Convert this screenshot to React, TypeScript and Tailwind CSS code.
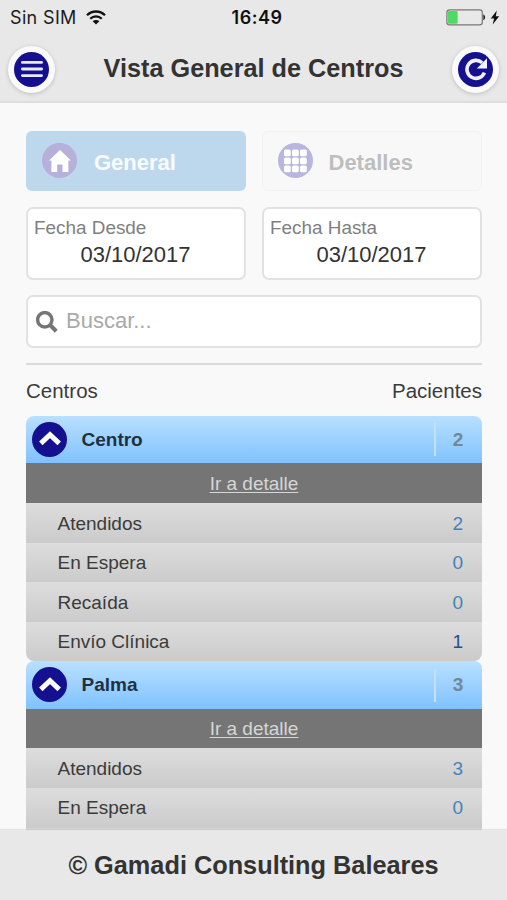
import type { ReactNode } from 'react';
import clsx from 'clsx';

interface CenterRow {
  label: string;
  value: number;
}

interface Center {
  name: string;
  total: number;
  rows: CenterRow[];
}

const CENTERS: Center[] = [
  {
    name: 'Centro',
    total: 2,
    rows: [
      { label: 'Atendidos', value: 2 },
      { label: 'En Espera', value: 0 },
      { label: 'Recaída', value: 0 },
      { label: 'Envío Clínica', value: 1 },
    ],
  },
  {
    name: 'Palma',
    total: 3,
    rows: [
      { label: 'Atendidos', value: 3 },
      { label: 'En Espera', value: 0 },
    ],
  },
];

function StatusBar() {
  return (
    <div className="grid h-[34px] grid-cols-3 items-center font-['Inter',sans-serif] text-[18px] text-[#1c1c1c]">
      <div className="flex items-center gap-[9px] pl-[10px]">
        <span className="tracking-[0.35px]">Sin SIM</span>
        <svg width="20" height="15" viewBox="0 0 20 15" fill="none" stroke="#111" strokeWidth="2.3">
          <path d="M1 5.2a12.8 12.8 0 0 1 18 0" />
          <path d="M4.3 8.7a8.1 8.1 0 0 1 11.4 0" />
          <path d="M10 14.6 6.7 11.3a4.7 4.7 0 0 1 6.6 0Z" fill="#111" stroke="none" />
        </svg>
      </div>
      <span className="pl-[7px] text-center font-semibold tracking-[0.5px] text-[#111]">16:49</span>
      <div className="flex items-center justify-end gap-[4px] pr-[7px]">
        <svg width="40" height="17" viewBox="0 0 40 17">
          <rect x="0.9" y="0.9" width="35.4" height="15" rx="2.6" fill="none" stroke="#777" strokeWidth="1.2" />
          <rect x="2" y="2" width="9.6" height="12.8" rx="1" fill="#4cd964" />
          <path d="M37.3 5.6c2.4.4 2.4 5.2 0 5.6Z" fill="#222" />
        </svg>
        <svg width="10" height="15" viewBox="0 0 10 15">
          <path d="M6.8.4.8 8.4h3.3L2.7 14.6 9.2 6.3H5.8Z" fill="#111" />
        </svg>
      </div>
    </div>
  );
}

function RoundButton({ label, children }: { label: string; children: ReactNode }) {
  return (
    <button
      type="button"
      aria-label={label}
      className="flex size-[47px] items-center justify-center rounded-full bg-[#fafafa] shadow-[0_1px_4px_rgba(0,0,0,0.18)]"
    >
      <span className="flex size-[35px] items-center justify-center rounded-full bg-[#14108f]">
        {children}
      </span>
    </button>
  );
}

function Tab({ label, active, icon }: { label: string; active?: boolean; icon: ReactNode }) {
  return (
    <button
      type="button"
      className={clsx(
        'flex h-[60px] items-center rounded-[6px] text-[22px] font-bold',
        active
          ? 'gap-[17px] bg-[#bdd8ec] pl-[16px] text-white/90'
          : 'gap-[16px] border border-[#f2f2f2] bg-[#f8f8f8] pl-[14.5px] text-[#bebebe]',
      )}
    >
      <span
        className={clsx(
          'mb-px flex size-[35px] items-center justify-center rounded-full',
          active ? 'bg-[#b5b1da]' : 'bg-[#b9b5df]',
        )}
      >
        {icon}
      </span>
      <span className="pt-[3px]">{label}</span>
    </button>
  );
}

function DateField({ label, value }: { label: string; value: string }) {
  return (
    <div className="h-[73px] rounded-[7px] border-2 border-[#e2e2e2] bg-white px-[6px] pt-[7px]">
      <p className="text-[18.9px] leading-[24px] text-[#7f7f7f]">{label}</p>
      <p className="pr-px text-center text-[22px] leading-[30px] text-[#333]">{value}</p>
    </div>
  );
}

function CenterGroup({ center, last }: { center: Center; last: boolean }) {
  return (
    <section
      className={clsx('shrink-0 overflow-hidden text-[19px]', last ? 'rounded-t-[8px]' : 'rounded-[8px]')}
    >
      <header className="flex h-[47.4px] items-center bg-linear-to-b from-[#b9e0ff] to-[#7fc2ff] pl-[6px]">
        <span className="mb-px flex size-[35px] items-center justify-center rounded-full bg-[#14108f]">
          <svg width="24" height="16" viewBox="0 0 24 16">
            <path d="m2.8 12.3 9.2-8.6 9.2 8.6" fill="none" stroke="#fff" strokeWidth="5" />
          </svg>
        </span>
        <span className="flex-1 pt-px pl-[14.5px] font-bold text-[#1f3140]">{center.name}</span>
        <span className="h-[33px] w-[2px] bg-linear-to-b from-[#bfe1fb] to-[#c9dded]" />
        <span className="w-[46px] pt-px pr-[2px] text-center font-bold text-[#71879a]">{center.total}</span>
      </header>
      <a className="flex h-[39.6px] items-center justify-center bg-[#757575] pt-[2px] text-[#d6d6d6] underline underline-offset-2">
        Ir a detalle
      </a>
      {center.rows.map((row) => (
        <div
          key={row.label}
          className="flex h-[39.6px] items-center justify-between bg-linear-to-b from-[#dddddd] to-[#cbcbcb] pt-[2px] pr-[19px] pl-[31.5px] text-[#3b3b3b]"
        >
          <span>{row.label}</span>
          <span className={row.label === 'Envío Clínica' ? 'text-[#24508c]' : 'text-[#4284ba]'}>
            {row.value}
          </span>
        </div>
      ))}
      {last ? <div className="h-[4px] bg-[#dadada]" /> : null}
    </section>
  );
}

export default function App() {
  return (
    <div className="flex h-[900px] w-[507px] flex-col overflow-hidden bg-[#f9f9f9] font-['Liberation_Sans',Arial,sans-serif] text-[#333]">
      <header className="h-[103px] shrink-0 border-b-2 border-[#dedede] bg-[#e8e8e8]">
        <StatusBar />
        <div className="flex h-[70px] items-center justify-between px-[8px]">
          <RoundButton label="Menú">
            <svg width="24" height="18" viewBox="0 0 24 18" stroke="#e9e9ff" strokeWidth="2.8" strokeLinecap="round">
              <path d="M2.4 2.4h19.2M2.4 9h19.2M2.4 15.6h19.2" />
            </svg>
          </RoundButton>
          <h1 className="text-[25.25px] font-bold">Vista General de Centros</h1>
          <RoundButton label="Actualizar">
            <svg width="24" height="24" viewBox="0 0 24 24">
              <path d="M18.2 5.8A9 9 0 1 0 20.4 15.6" fill="none" stroke="#f2f2ff" strokeWidth="3.6" />
              <path d="M23 1.2v10.2h-10.2Z" fill="#f2f2ff" />
            </svg>
          </RoundButton>
        </div>
      </header>

      <main className="flex min-h-0 flex-1 flex-col overflow-hidden pt-[28px] pr-[25px] pl-[26px]">
        <div className="grid shrink-0 grid-cols-2 gap-x-[16px] gap-y-[16px]">
          <Tab
            label="General"
            active
            icon={
              <svg width="22" height="22" viewBox="0 0 22 22" fill="#fff">
                <path d="M11 0 0 10.6h2.4V22h5.8v-7.6h5.3V22h5.9V10.6H22Z" />
              </svg>
            }
          />
          <Tab
            label="Detalles"
            icon={
              <svg width="23" height="24" viewBox="0 0 23 24" fill="#fff">
                {[0, 8, 16].map((y) =>
                  [0, 8, 16].map((x) => (
                    <rect key={`${x}-${y}`} x={x} y={y + 0.5} width="6.8" height="6.8" rx="1.6" />
                  )),
                )}
              </svg>
            }
          />
          <DateField label="Fecha Desde" value="03/10/2017" />
          <DateField label="Fecha Hasta" value="03/10/2017" />
        </div>

        <div className="mt-[15px] flex h-[53px] shrink-0 items-center gap-[8px] rounded-[7px] border-2 border-[#e2e2e2] bg-white pl-[8px]">
          <svg width="22" height="22" viewBox="0 0 22 22" fill="none" stroke="#757575">
            <circle cx="8.8" cy="8.8" r="7.2" strokeWidth="3.4" />
            <path d="m14 14 6.3 6.2" strokeWidth="4" />
          </svg>
          <span className="pb-[2px] text-[22px] text-[#a9a9a9]">Buscar...</span>
        </div>

        <hr className="mt-[15px] shrink-0 border-t-2 border-[#dadada]" />

        <div className="flex h-[51px] shrink-0 items-center justify-between pt-[2px] text-[20.5px] text-[#3b3b3b]">
          <span>Centros</span>
          <span>Pacientes</span>
        </div>

        {CENTERS.map((center, index) => (
          <CenterGroup key={center.name} center={center} last={index === CENTERS.length - 1} />
        ))}
      </main>

      <footer className="z-10 flex h-[70px] shrink-0 items-center justify-center bg-[#e8e8e8] pt-px text-[25.3px] font-bold shadow-[0_-1px_1px_rgba(0,0,0,0.08)]">
        © Gamadi Consulting Baleares
      </footer>
    </div>
  );
}
